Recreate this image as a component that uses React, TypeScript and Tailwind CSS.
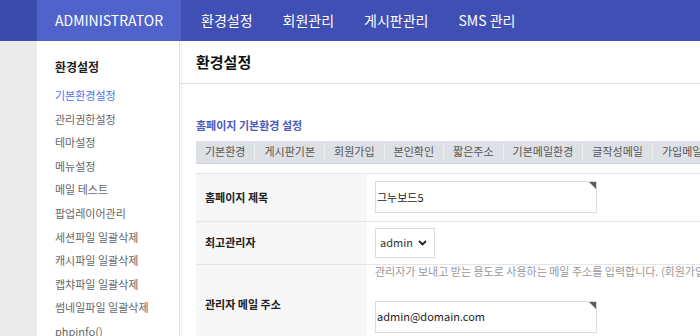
import React from 'react';

const FONT = { fontFamily: '"Noto Sans CJK KR", "Noto Sans", sans-serif' };

const NAV = ['환경설정', '회원관리', '게시판관리', 'SMS 관리'];

const MENU = [
  '기본환경설정',
  '관리권한설정',
  '테마설정',
  '메뉴설정',
  '메일 테스트',
  '팝업레이어관리',
  '세션파일 일괄삭제',
  '캐시파일 일괄삭제',
  '캡챠파일 일괄삭제',
  '썸네일파일 일괄삭제',
  'phpinfo()',
];

const TABS = ['기본환경', '게시판기본', '회원가입', '본인확인', '짧은주소', '기본메일환경', '글작성메일', '가입메일', '투표', '최근게시물'];

// required marker on text inputs
const Corner = () => (
  <span className="absolute right-0 top-0 h-0 w-0 border-l-[7px] border-t-[7px] border-l-transparent border-t-[#5b5f52]" />
);

const App = () => {
  return (
    <div className="h-[336px] w-full overflow-hidden bg-white text-[#333]" style={FONT}>
      {/* Top bar */}
      <div className="flex h-[41px] bg-[#3f4fb4]">
        <div className="w-[37px] shrink-0 bg-[#3c4bae]" />
        <div className="flex w-[144px] shrink-0 items-center bg-[#5063cb] pl-[18px] text-[14px] text-white">ADMINISTRATOR</div>
        <div className="flex items-center gap-[30px] pl-[20px] text-[14px] text-white">
          {NAV.map((n) => (
            <span key={n} className="whitespace-nowrap">{n}</span>
          ))}
        </div>
      </div>

      <div className="flex h-[295px]">
        <div className="w-[37px] shrink-0 bg-[#ebebeb]" />

        {/* Sidebar */}
        <div className="w-[143px] shrink-0 border-r border-[#e3e3e3] bg-white pl-[18px] pt-[17px] shadow-[2px_0_3px_rgba(0,0,0,0.05)]">
          <div className="mb-[8px] text-[12px] font-bold text-[#222]">환경설정</div>
          <ul className="text-[11px] leading-[23.6px]">
            {MENU.map((m, i) => (
              <li key={m} className={i === 0 ? 'text-[#4a72f5]' : 'text-[#666]'}>
                {m}
              </li>
            ))}
          </ul>
        </div>

        {/* Main */}
        <div className="min-w-0 flex-1">
          <div className="flex h-[43px] items-center border-b border-[#e2e2e2] pl-[16px] text-[15px] font-bold text-[#111]">
            환경설정
          </div>

          <div className="pl-[16px]">
            <div className="mt-[33px] text-[11px] font-bold text-[#4a5bbd]">홈페이지 기본환경 설정</div>

            <div className="mt-[7px] flex h-[23px] items-center whitespace-nowrap border-b border-[#cfd3d8] bg-[#dde1e6] text-[11px] text-[#555]">
              {TABS.map((t, i) => (
                <span key={t} className={`px-[9px] ${i > 0 ? 'border-l border-[#eef0f2]' : ''}`}>
                  {t}
                </span>
              ))}
            </div>

            <div className="mt-[9px] w-[700px] text-[11px]">
              <div className="flex h-[48px] border-t border-[#e6e6e6]">
                <div className="flex w-[171px] shrink-0 items-center bg-[#f7f7f7] pl-[9px] font-bold text-[#222]">홈페이지 제목</div>
                <div className="flex items-center pl-[8px]">
                  <div className="relative flex h-[32px] w-[222px] items-center border border-[#dcdcdc] bg-white pl-[1px] text-[#222]">
                    그누보드5
                    <Corner />
                  </div>
                </div>
              </div>

              <div className="flex h-[43px] border-t border-[#e6e6e6]">
                <div className="flex w-[171px] shrink-0 items-center bg-[#f7f7f7] pl-[9px] font-bold text-[#222]">최고관리자</div>
                <div className="flex items-center pl-[8px]">
                  <div className="flex h-[30px] w-[60px] items-center justify-between border border-[#dcdcdc] bg-white pl-[4px] pr-[7px] text-[#333]">
                    admin
                    <svg width="9" height="6" viewBox="0 0 9 6">
                      <path d="M1 1l3.5 3.5L8 1" fill="none" stroke="#222" strokeWidth="1.8" />
                    </svg>
                  </div>
                </div>
              </div>

              <div className="flex h-[80px] border-t border-[#e6e6e6]">
                <div className="flex w-[171px] shrink-0 items-center bg-[#f7f7f7] pl-[9px] font-bold text-[#222]">관리자 메일 주소</div>
                <div className="min-w-0 pl-[8px]">
                  <div className="whitespace-nowrap leading-[12px] text-[#999]">
                    관리자가 보내고 받는 용도로 사용하는 메일 주소를 입력합니다. (회원가입, 인증메일, 테스트, 회원메일발송 등에서 사용)
                  </div>
                  <div className="relative mt-[24px] flex h-[32px] w-[222px] items-center border border-[#dcdcdc] bg-white pl-[1px] text-[#222]">
                    admin@domain.com
                    <Corner />
                  </div>
                </div>
              </div>
            </div>
          </div>
        </div>
      </div>
    </div>
  );
};

export default App;
